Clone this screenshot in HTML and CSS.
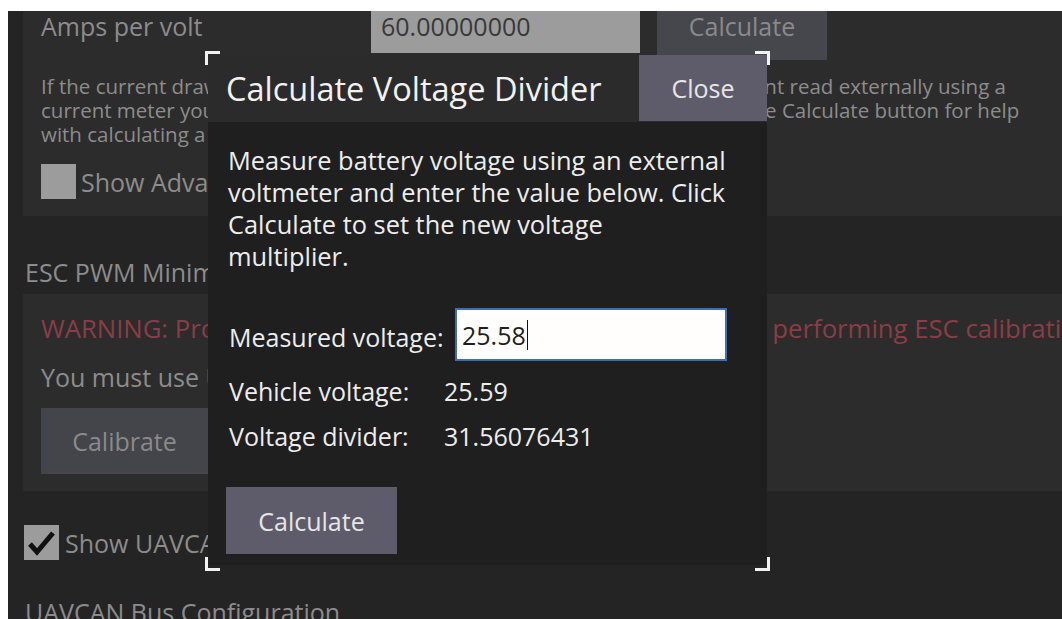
FILE: index.html
```html
<!DOCTYPE html>
<html lang="en">
<head>
<meta charset="utf-8">
<title>Power Setup</title>
<link rel="stylesheet" href="styles.css">
</head>
<body>
<div class="screen">
  <div class="page">
    <section class="panel panel-power">
      <div class="param-row">
        <span class="param-label">Amps per volt</span>
        <div class="param-field">60.00000000</div>
        <button class="btn btn-dim btn-param">Calculate</button>
      </div>
      <p class="help">If the current draw reported by the vehicle is largely different than the current read externally using a<br>current meter you can adjust the amps per volt value to correct this. Click the Calculate button for help<br>with calculating a new value.</p>
      <div class="check-row check-adv">
        <span class="check-box"></span>
        <span class="check-text">Show Advanced Settings</span>
      </div>
    </section>

    <h2 class="section-title title-esc">ESC PWM Minimum and Maximum Calibration</h2>
    <section class="panel panel-esc">
      <p class="warning">WARNING: Propellers must be removed from vehicle prior to performing ESC calibration.</p>
      <p class="note">You must use USB connection for this operation.</p>
      <button class="btn btn-dim btn-calibrate">Calibrate</button>
    </section>

    <div class="check-row check-uavcan">
      <span class="check-box checked">
        <svg viewBox="0 0 35 35" width="35" height="35"><path d="M6 19 L13 27 L29 8" fill="none" stroke="#111" stroke-width="5" stroke-linejoin="miter" stroke-linecap="butt"/></svg>
      </span>
      <span class="check-text">Show UAVCAN Settings</span>
    </div>
    <h2 class="section-title title-uavcan">UAVCAN Bus Configuration</h2>
  </div>

  <div class="dialog">
    <span class="corner corner-tl"></span>
    <span class="corner corner-tr"></span>
    <span class="corner corner-bl"></span>
    <span class="corner corner-br"></span>
    <header class="dialog-head">
      <h1 class="dialog-title">Calculate Voltage Divider</h1>
      <button class="btn btn-close">Close</button>
    </header>
    <div class="dialog-body">
      <p class="dialog-text">Measure battery voltage using an external<br>voltmeter and enter the value below. Click<br>Calculate to set the new voltage<br>multiplier.</p>
      <div class="value-grid">
        <span class="value-label">Measured voltage:</span>
        <div class="value-input"><span>25.58</span><span class="caret"></span></div>
        <span class="value-label">Vehicle voltage:</span>
        <span class="value-text">25.59</span>
        <span class="value-label">Voltage divider:</span>
        <span class="value-text">31.56076431</span>
      </div>
      <button class="btn btn-calc">Calculate</button>
    </div>
  </div>
</div>
</body>
</html>
```

FILE: styles.css
```css
html, body {
  margin: 0;
  padding: 0;
  background: #ffffff;
}

body {
  font-family: "Open Sans", "Noto Sans", sans-serif;
  overflow: hidden;
}

.screen {
  position: relative;
  margin: 11px 0 0 8px;
  height: 608px;
  background: #242424;
  overflow: hidden;
}

.page {
  padding-left: 15px;
  color: #8c8c8c;
}

.panel {
  background: #2c2c2c;
  width: 1100px;
  box-sizing: border-box;
}

/* ---------- power panel ---------- */
.panel-power {
  padding: 0 0 17px 18px;
}

.param-row {
  display: flex;
  align-items: flex-start;
  height: 49px;
}

.param-label {
  width: 330px;
  font-size: 25px;
  line-height: 30px;
  white-space: nowrap;
}

.param-field {
  width: 269px;
  height: 42px;
  box-sizing: border-box;
  padding-left: 10px;
  background: #9c9c9c;
  color: #383838;
  font-size: 25px;
  line-height: 30px;
}

.btn {
  font-family: "Open Sans", "Noto Sans", sans-serif;
  border: none;
  padding: 0;
  margin: 0;
  cursor: default;
}

.btn-dim {
  background: #46464d;
  color: #8a8a8a;
  font-size: 25px;
}

.btn-param {
  width: 170px;
  height: 49px;
  margin-left: 17px;
  line-height: 30px;
  display: flex;
  justify-content: center;
  align-items: flex-start;
}

.help {
  margin: 14px 0 0;
  font-size: 20.5px;
  line-height: 24px;
  white-space: nowrap;
}

.check-row {
  display: flex;
  align-items: center;
}

.check-box {
  width: 35px;
  height: 35px;
  background: #9c9c9c;
  flex: none;
}

.check-box svg {
  display: block;
}

.check-text {
  font-size: 25px;
  line-height: 34px;
  white-space: nowrap;
}

.check-adv {
  margin-top: 18px;
}

.check-adv .check-text {
  margin-left: 5px;
}

/* ---------- section titles ---------- */
.section-title {
  margin: 0;
  padding-left: 2px;
  font-weight: normal;
  font-size: 25px;
  line-height: 30px;
  white-space: nowrap;
}

.title-esc {
  margin-top: 41px;
}

/* ---------- esc panel ---------- */
.panel-esc {
  margin-top: 7px;
  padding: 18px 0 17px 18px;
}

.warning {
  margin: 0;
  color: #8b3d46;
  font-size: 25.7px;
  line-height: 34px;
  white-space: nowrap;
}

.note {
  margin: 14px 0 0;
  font-size: 25px;
  line-height: 34px;
  white-space: nowrap;
}

.btn-calibrate {
  display: block;
  margin-top: 14px;
  width: 167px;
  height: 66px;
  background: #44444b;
}

/* ---------- uavcan ---------- */
.check-uavcan {
  margin-top: 34px;
  margin-left: 1px;
}

.check-uavcan .check-text {
  margin-left: 6px;
}

.title-uavcan {
  margin-top: 35px;
  line-height: 34px;
}

/* ---------- dialog ---------- */
.dialog {
  position: absolute;
  left: 200px;
  top: 44px;
  width: 559px;
  height: 510px;
  background: #1f1f1f;
  color: #ededed;
}

.corner {
  position: absolute;
  width: 12px;
  height: 11px;
  border: 0 solid #f2f2f2;
}

.corner-tl {
  left: -3px;
  top: -4px;
  border-left-width: 3px;
  border-top-width: 3px;
}

.corner-tr {
  right: -3px;
  top: -4px;
  border-right-width: 3px;
  border-top-width: 3px;
}

.corner-bl {
  left: -3px;
  bottom: -6px;
  border-left-width: 3px;
  border-bottom-width: 3px;
}

.corner-br {
  right: -3px;
  bottom: -6px;
  border-right-width: 3px;
  border-bottom-width: 3px;
}

.dialog-head {
  display: flex;
  height: 67px;
  background: #2b2b2b;
}

.dialog-title {
  flex: 1;
  margin: 0;
  padding-left: 18px;
  font-weight: normal;
  font-size: 32.5px;
  line-height: 67px;
  color: #f2f2f2;
  white-space: nowrap;
}

.btn-close {
  width: 128px;
  height: 66px;
  background: #5e5c6a;
  color: #e6e6e6;
  font-size: 25px;
}

.dialog-body {
  padding: 22px 18px 0;
}

.dialog-text {
  margin: 0;
  padding-left: 2px;
  font-size: 25.4px;
  line-height: 32px;
  white-space: nowrap;
}

.value-grid {
  display: grid;
  grid-template-columns: 215px 1fr;
  row-gap: 15px;
  align-items: center;
  margin-top: 36px;
  padding-left: 3px;
  font-size: 25px;
  line-height: 30px;
}

.value-label:first-child {
  padding-top: 5px;
}

.value-input {
  display: flex;
  align-items: center;
  margin-left: 11px;
  width: 272px;
  height: 53px;
  box-sizing: border-box;
  padding-left: 5px;
  background: #fffefc;
  border: 2px solid #3f6fb2;
  color: #1e1e1e;
}

.caret {
  width: 1.5px;
  height: 30px;
  background: #111;
  margin-left: 1px;
}

.btn-calc {
  display: block;
  margin-top: 36px;
  width: 171px;
  height: 67px;
  background: #5e5c6a;
  color: #e6e6e6;
  font-size: 25px;
}
```
